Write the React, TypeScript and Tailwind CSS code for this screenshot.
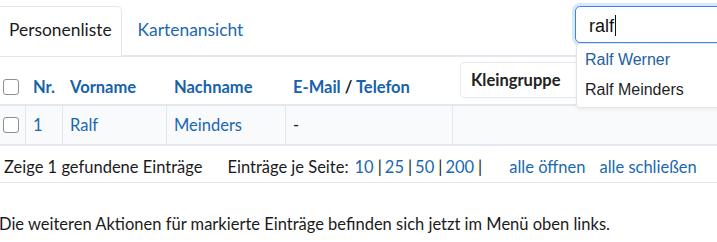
import React from 'react';

const lato = { fontFamily: 'Lato, "Noto Sans", sans-serif' };
const arial = { fontFamily: '"Liberation Sans", Arial, sans-serif' };

function Box() {
  return <span className="block h-[16px] w-[16px] rounded-[3px] border border-[#8a8f98] bg-white" />;
}

function Sep() {
  return <span className="ml-[4px] mr-[3px] text-[#1b1b1b]">|</span>;
}

export default function App() {
  return (
    <div className="relative h-[242px] w-[717px] overflow-hidden bg-white text-[16.5px] text-[#1b1b1b]" style={lato}>
      {/* Tabs + Suche */}
      <div className="flex h-[56px] items-start justify-between border-b border-[#e3e8ef] pt-[6px]">
        <div className="flex h-[50px] items-stretch text-[17.4px]">
          <div className="flex items-center rounded-tr-[5px] border-r border-t border-[#e3e8ef] bg-white px-[9px] pb-[2px]">
            Personenliste
          </div>
          <div className="flex items-center pl-[16px] pb-[2px] text-[#1a68b0]">Kartenansicht</div>
        </div>
        <div className="relative mr-[-20px] h-[37px] w-[162px] rounded-[5px] border border-[#3b82f6] bg-white shadow-[0_0_0_3px_#d6e9fb]">
          <span className="absolute left-[13px] top-[4px] text-[18px] text-[#111]" style={arial}>
            ralf<span className="ml-[1px] inline-block h-[21px] w-[1px] translate-y-[4px] bg-[#111]" />
          </span>
        </div>
      </div>

      {/* Vorschläge */}
      <div
        className="absolute left-[576px] top-[43px] z-10 flex h-[65px] w-[160px] flex-col rounded-[4px] border border-[#e3e6ea] bg-white pl-[8px] text-[16px] shadow-[0_2px_4px_rgba(0,0,0,0.06)]"
        style={arial}
      >
        <div className="pt-[3px] leading-[26px] text-[#24609c]">Ralf Werner</div>
        <div className="pt-[4px] leading-[26px] text-[#1f1f1f]">Ralf Meinders</div>
      </div>

      {/* Tabelle */}
      <div className="border-t border-[#e3e8ef]">
        <div className="grid h-[49px] grid-cols-[26px_37px_104px_119px_167px_1fr] items-end border-b-2 border-[#e3e8ef] pb-[4px] font-bold text-[#1662ab]">
          <div className="pb-[5px] pl-[3px]"><Box /></div>
          <div className="pl-[7px]">Nr.</div>
          <div className="pl-[7px]">Vorname</div>
          <div className="pl-[7px]">Nachname</div>
          <div className="pl-[7px]">
            E-Mail <span className="text-[#1b1b1b]">/</span> Telefon
          </div>
          <div className="self-start pl-[7px] pt-[5px]">
            <div className="flex h-[36px] w-[140px] items-center rounded-[4px] border border-[#e6e8eb] bg-white pl-[10px] pt-[1px] text-[#222]">
              Kleingruppe
            </div>
          </div>
        </div>
        <div className="grid h-[40px] grid-cols-[26px_37px_104px_119px_167px_1fr] border-b-2 border-[#e3e8ef] bg-[#f8fafc] text-[#1a68b0]">
          <div className="flex items-center border-r border-[#e3e8ef] pl-[3px]"><Box /></div>
          <div className="flex items-center border-r border-[#e3e8ef] pl-[7px]">1</div>
          <div className="flex items-center border-r border-[#e3e8ef] pl-[7px]">Ralf</div>
          <div className="flex items-center border-r border-[#e3e8ef] pl-[7px]">Meinders</div>
          <div className="flex items-center border-r border-[#e3e8ef] pl-[7px] text-[#1b1b1b]">-</div>
          <div />
        </div>
      </div>

      {/* Fußzeile */}
      <div className="flex h-[37px] items-center border-b border-[#e3e8ef] pl-[4px] pt-[6px]">
        <span>Zeige 1 gefundene Einträge</span>
        <span className="ml-[25px]">Einträge je Seite:</span>
        <span className="ml-[6px] text-[#1a68b0]">10</span>
        <Sep />
        <span className="text-[#1a68b0]">25</span>
        <Sep />
        <span className="text-[#1a68b0]">50</span>
        <Sep />
        <span className="text-[#1a68b0]">200</span>
        <span className="ml-[4px]">|</span>
        <span className="ml-[27px] text-[#1a68b0]">alle öffnen</span>
        <span className="ml-[14px] text-[#1a68b0]">alle schließen</span>
      </div>

      <p className="ml-[-1px] mt-[29px]">Die weiteren Aktionen für markierte Einträge befinden sich jetzt im Menü oben links.</p>
    </div>
  );
}
